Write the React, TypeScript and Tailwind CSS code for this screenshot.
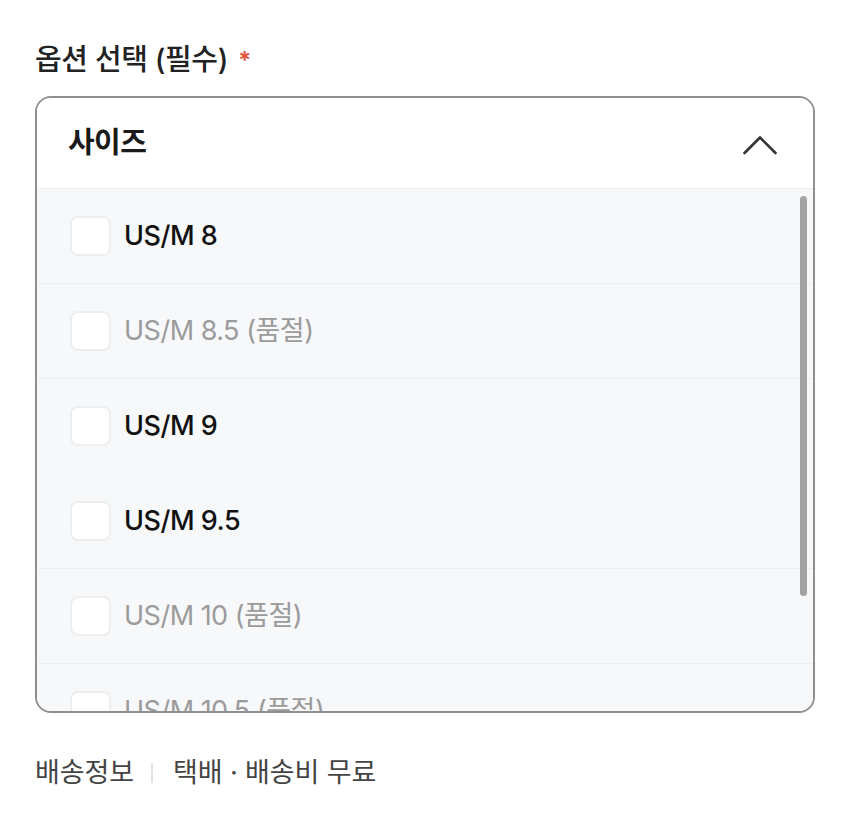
type SizeOption = { label: string; soldOut?: boolean; divider?: boolean };

const sizes: SizeOption[] = [
  { label: "US/M 8", divider: true },
  { label: "US/M 8.5", soldOut: true, divider: true },
  { label: "US/M 9" },
  { label: "US/M 9.5", divider: true },
  { label: "US/M 10", soldOut: true, divider: true },
  { label: "US/M 10.5", soldOut: true, divider: true },
  { label: "US/M 11" },
];

const font = { fontFamily: 'Inter, "Noto Sans CJK KR", "Noto Sans", sans-serif' };

export default function App() {
  return (
    <div className="h-[826px] w-[850px] bg-white px-[35px] pt-[38px]" style={font}>
      <h2 className="flex items-center text-[29px] font-medium leading-[42px] tracking-[-0.4px] text-[#222]">
        옵션 선택 (필수)
        <span className="ml-[10px] mt-[2px] text-[24px] font-bold text-[#e2553f]">*</span>
      </h2>

      <div className="relative mt-[14px] h-[617px] overflow-hidden rounded-[16px] border-2 border-[#8f8f8f]">
        <div className="flex h-[91px] items-center justify-between border-b border-[#eceef1] bg-white pl-[31px] pr-[36px]">
          <span className="text-[29px] font-bold tracking-[-0.6px] text-[#1a1a1a]">사이즈</span>
          <svg width="34" height="22" viewBox="0 0 34 22" fill="none" className="mt-[2px]">
            <path d="M1.5 20 L17 4.5 L32.5 20" stroke="#333" strokeWidth="2.6" strokeLinecap="round" strokeLinejoin="round" />
          </svg>
        </div>

        <ul className="h-[524px] overflow-hidden bg-[#f7f8fa]">
          {sizes.map((size) => (
            <li
              key={size.label}
              className={`flex h-[95px] items-center gap-[13px] pl-[33px] ${size.divider ? "border-b border-[#edeff2]" : "border-b border-transparent"}`}
            >
              <span className="h-[40px] w-[41px] rounded-[8px] border-2 border-[#eceef0] bg-white" />
              <span className={`text-[27px] tracking-[-0.5px] ${size.soldOut ? "text-[#9b9b9b]" : "font-medium text-[#111]"}`}>
                {size.label}
                {size.soldOut ? " (품절)" : ""}
              </span>
            </li>
          ))}
        </ul>

        <div className="absolute right-[6px] top-[98px] h-[400px] w-[7px] rounded-full bg-[#a3a3a3]" />
      </div>

      <div className="mt-[42px] flex items-center text-[27px] leading-[36px] tracking-[-0.1px] text-[#444]">
        <span>배송정보</span>
        <span className="ml-[17px] mr-[20px] h-[20px] w-[2px] bg-[#e2e2e2]" />
        <span>택배 · 배송비 무료</span>
      </div>
    </div>
  );
}
